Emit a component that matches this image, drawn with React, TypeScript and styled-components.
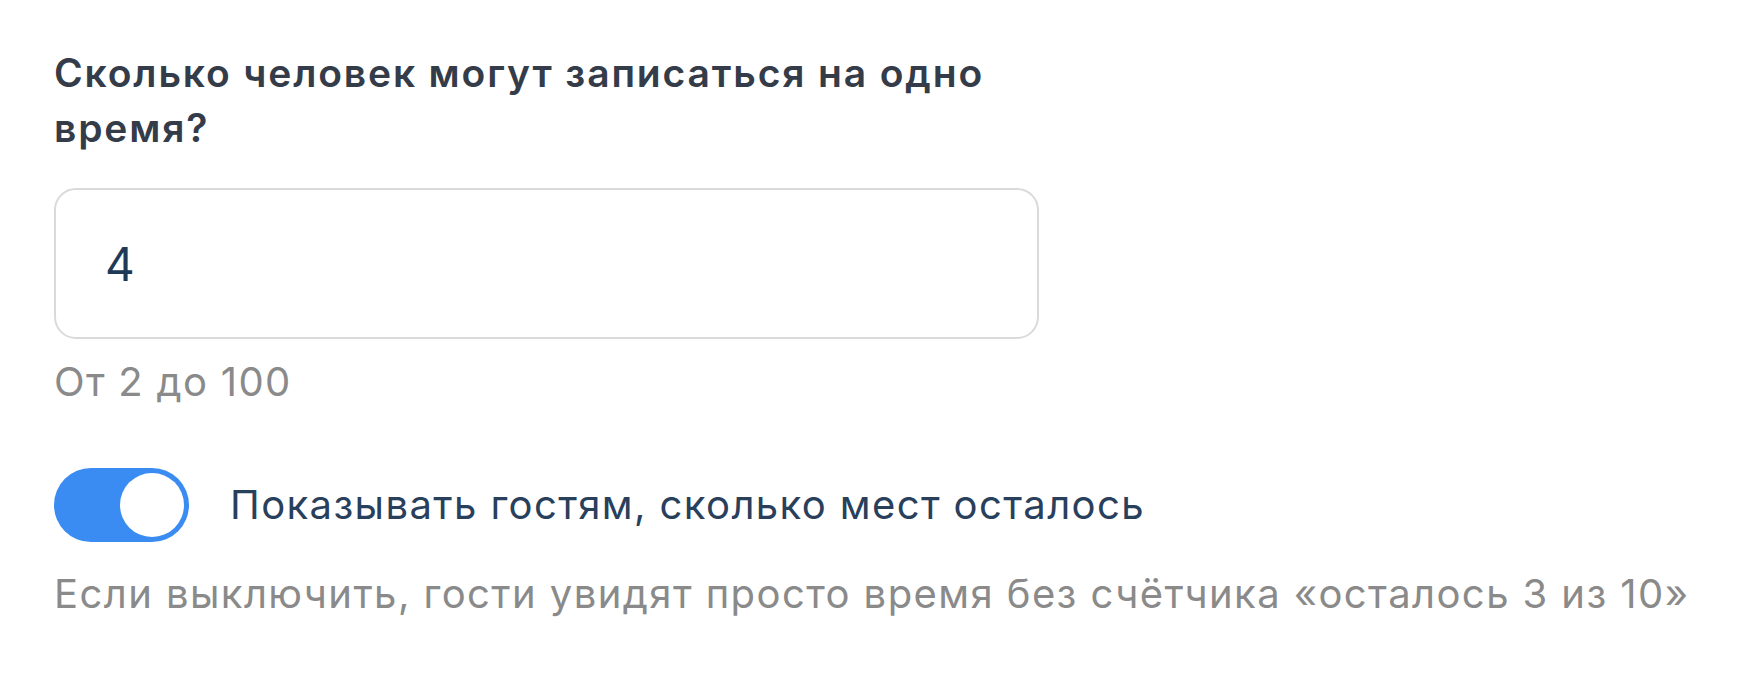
import { useState } from "react";
import styled, { createGlobalStyle } from "styled-components";

const GlobalStyle = createGlobalStyle`
  html, body {
    margin: 0;
    padding: 0;
    background: #ffffff;
  }
  body {
    font-family: Inter, "Noto Sans", "Liberation Sans", sans-serif;
    -webkit-font-smoothing: antialiased;
  }
`;

const Page = styled.div`
  display: flex;
  flex-direction: column;
  align-items: flex-start;
  padding: 45px 0 40px 54px;
`;

const Title = styled.h2`
  margin: 0;
  width: 985px;
  font-size: 39px;
  line-height: 55px;
  font-weight: 600;
  letter-spacing: 1.85px;
  color: #343c49;
`;

const Field = styled.input`
  margin-top: 33px;
  width: 985px;
  height: 151px;
  box-sizing: border-box;
  padding: 0 0 0 49px;
  border: 2px solid #dadada;
  border-radius: 22px;
  background: #ffffff;
  font-family: inherit;
  font-size: 46px;
  color: #1f3a57;
  outline: none;
`;

const Hint = styled.p<{ $gap: number; $spacing?: number }>`
  margin: ${p => p.$gap}px 0 0;
  font-size: 40px;
  line-height: 54px;
  letter-spacing: ${p => p.$spacing ?? 1.3}px;
  color: #8a8a8a;
`;

const SwitchRow = styled.label`
  display: flex;
  align-items: center;
  gap: 41px;
  margin-top: 59px;
  cursor: pointer;
`;

const Track = styled.button<{ $on: boolean }>`
  display: flex;
  align-items: center;
  justify-content: ${p => (p.$on ? "flex-end" : "flex-start")};
  width: 135px;
  height: 74px;
  padding: 0 5px;
  box-sizing: border-box;
  border: none;
  border-radius: 37px;
  background: ${p => (p.$on ? "#3a8cf3" : "#d4d7dc")};
  cursor: pointer;
`;

const Knob = styled.span`
  width: 64px;
  height: 64px;
  border-radius: 50%;
  background: #ffffff;
`;

const SwitchText = styled.span`
  font-size: 40px;
  line-height: 56px;
  letter-spacing: 1.4px;
  color: #29405c;
`;

export default function App() {
  const [seats, setSeats] = useState("4");
  const [showLeft, setShowLeft] = useState(true);

  return (
    <>
      <GlobalStyle />
      <Page>
        <Title>Сколько человек могут записаться на одно время?</Title>
        <Field
          type="text"
          inputMode="numeric"
          value={seats}
          onChange={e => setSeats(e.target.value)}
        />
        <Hint $gap={16}>От 2 до 100</Hint>
        <SwitchRow>
          <Track
            type="button"
            role="switch"
            aria-checked={showLeft}
            $on={showLeft}
            onClick={() => setShowLeft(v => !v)}
          >
            <Knob />
          </Track>
          <SwitchText>Показывать гостям, сколько мест осталось</SwitchText>
        </SwitchRow>
        <Hint $gap={25} $spacing={1.42}>
          Если выключить, гости увидят просто время без счётчика «осталось 3 из 10»
        </Hint>
      </Page>
    </>
  );
}
